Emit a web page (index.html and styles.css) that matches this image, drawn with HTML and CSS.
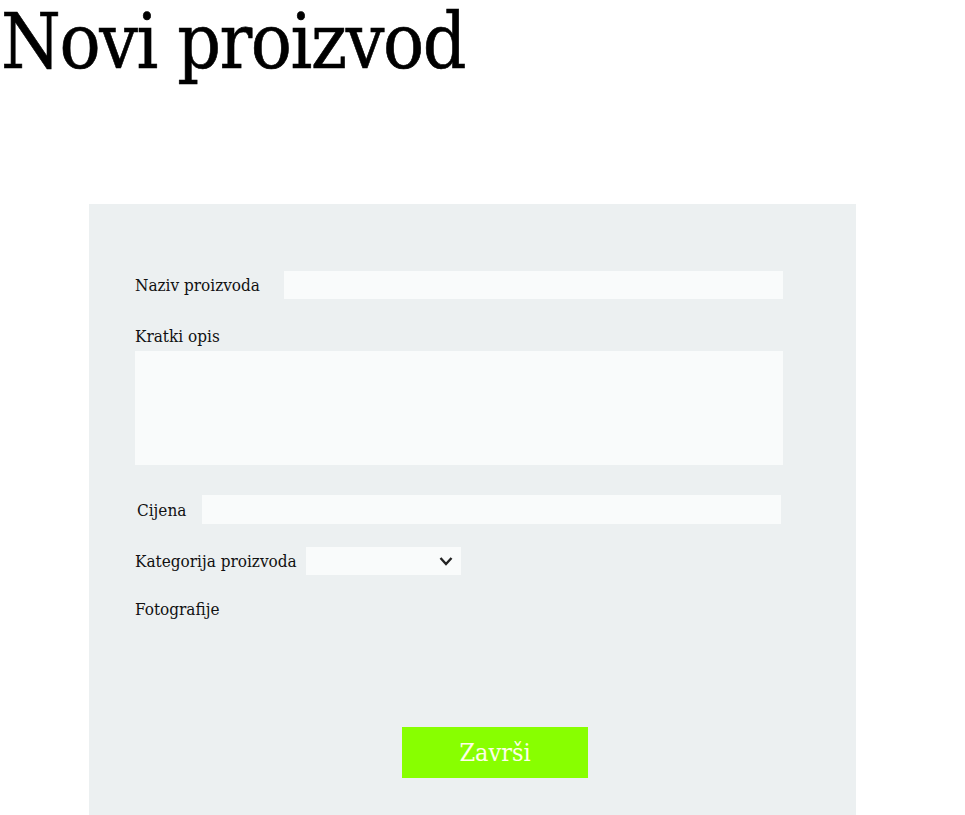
FILE: index.html
```html
<!DOCTYPE html>
<html lang="hr">
<head>
<meta charset="utf-8">
<title>Novi proizvod</title>
<link rel="stylesheet" href="styles.css">
</head>
<body>
<h1 class="title">Novi proizvod</h1>
<form class="panel">
  <div class="row row-naziv">
    <label class="label">Naziv proizvoda</label>
    <div class="field field-naziv"></div>
  </div>
  <div class="block block-opis">
    <label class="label">Kratki opis</label>
    <div class="field field-opis"></div>
  </div>
  <div class="row row-cijena">
    <label class="label label-cijena">Cijena</label>
    <div class="field field-cijena"></div>
  </div>
  <div class="row row-kat">
    <label class="label">Kategorija proizvoda</label>
    <div class="field field-kat">
      <svg class="chev" width="14" height="10" viewBox="0 0 14 10"><path d="M1.5 2 L7 8 L12.5 2" fill="none" stroke="#222" stroke-width="2.4"/></svg>
    </div>
  </div>
  <div class="block block-foto">
    <label class="label">Fotografije</label>
  </div>
  <div class="actions">
    <button type="button" class="btn">Završi</button>
  </div>
</form>
</body>
</html>
```
FILE: styles.css
```css
html, body {
  margin: 0;
  padding: 0;
  background: #ffffff;
}
body {
  font-family: "DejaVu Serif", "Liberation Serif", serif;
  color: #111;
  width: 965px;
  height: 815px;
  overflow: hidden;
}
.title {
  margin: 0;
  padding: 0 0 0 1px;
  font-family: "DejaVu Serif Condensed", "DejaVu Serif", serif;
  font-weight: normal;
  font-size: 76px;
  line-height: 84px;
  letter-spacing: -1.4px;
  height: 204px;
  color: #000;
  -webkit-text-stroke: 0.6px #000;
}
.panel {
  margin: 0 0 0 89px;
  width: 767px;
  height: 611px;
  background: #ecf0f1;
  padding: 67px 0 0 46px;
  box-sizing: border-box;
  display: flex;
  flex-direction: column;
}
.label {
  font-family: "DejaVu Serif Condensed", "DejaVu Serif", serif;
  font-size: 17px;
  line-height: 22px;
  color: #111;
  white-space: nowrap;
}
.field {
  background: #f9fbfb;
}
.row {
  display: flex;
  align-items: center;
}
.row-naziv .label { width: 149px; }
.field-naziv { width: 499px; height: 28px; }
.block-opis { margin-top: 26px; display: flex; flex-direction: column; }
.field-opis { margin-top: 4px; width: 648px; height: 114px; }
.row-cijena { margin-top: 30px; }
.label-cijena { width: 67px; padding-left: 2px; box-sizing: border-box; }
.field-cijena { width: 579px; height: 29px; }
.row-kat { margin-top: 23px; }
.row-kat .label { width: 171px; }
.field-kat {
  width: 155px;
  height: 28px;
  display: flex;
  align-items: center;
  justify-content: flex-end;
  padding-right: 8px;
  box-sizing: border-box;
}
.block-foto { margin-top: 23px; }
.actions {
  margin-top: 107px;
  padding-left: 267px;
}
.btn {
  width: 186px;
  height: 51px;
  border: none;
  background: #88ff00;
  color: #fffde8;
  font-family: "DejaVu Serif Condensed", "DejaVu Serif", serif;
  font-size: 25px;
  padding: 0;
}
```
